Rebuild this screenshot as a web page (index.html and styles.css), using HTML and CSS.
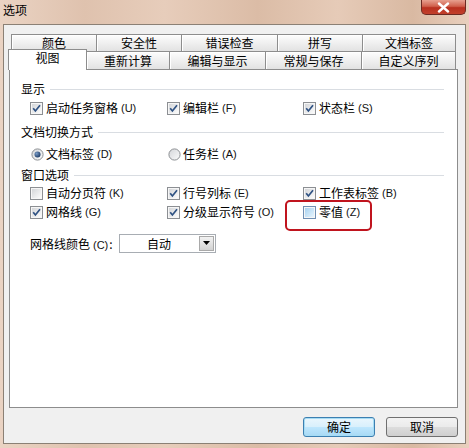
FILE: index.html
```html
<!DOCTYPE html>
<html lang="zh-CN">
<head>
<meta charset="utf-8">
<title>选项</title>
<link rel="stylesheet" href="styles.css">
</head>
<body>
<svg class="defs" width="0" height="0" aria-hidden="true">
  <defs>
    <linearGradient id="gbox" x1="0" y1="0" x2="1" y2="1">
      <stop offset="0" stop-color="#d4d6d9"/>
      <stop offset="1" stop-color="#fbfbfb"/>
    </linearGradient>
    <linearGradient id="gblue" x1="0" y1="0" x2="1" y2="1">
      <stop offset="0" stop-color="#a8d2f0"/>
      <stop offset="1" stop-color="#e6f4fd"/>
    </linearGradient>
    <radialGradient id="gdot" cx="0.35" cy="0.35" r="0.7">
      <stop offset="0" stop-color="#7a9cc6"/>
      <stop offset="1" stop-color="#1d3b66"/>
    </radialGradient>
    <symbol id="cbox" viewBox="0 0 13 13">
      <rect x="0.5" y="0.5" width="12" height="12" fill="#f6f6f6" stroke="#8c8f93"/>
      <rect x="2" y="2" width="9" height="9" fill="url(#gbox)"/>
    </symbol>
    <symbol id="cboxblue" viewBox="0 0 13 13">
      <rect x="0.5" y="0.5" width="12" height="12" fill="#f6f6f6" stroke="#6f8fb3"/>
      <rect x="2" y="2" width="9" height="9" fill="url(#gblue)"/>
    </symbol>
    <symbol id="tick" viewBox="0 0 13 13">
      <path d="M3.2 6.2 L5.4 9 L10 3.2" fill="none" stroke="#2f5283" stroke-width="1.7"/>
    </symbol>
    <symbol id="radio" viewBox="0 0 13 13">
      <circle cx="6.5" cy="6.5" r="5.6" fill="url(#gbox)" stroke="#8c8f93"/>
    </symbol>
    <symbol id="dot" viewBox="0 0 13 13">
      <circle cx="6.5" cy="6.5" r="3" fill="url(#gdot)"/>
    </symbol>
  </defs>
</svg>

<div class="window">
  <div class="titlebar">
    <span class="title">选项</span>
    <div class="close">
      <svg width="13" height="11" viewBox="0 0 13 11"><path d="M2 1.5 L11 9.5 M11 1.5 L2 9.5" stroke="#fff" stroke-width="2.4" stroke-linecap="round"/></svg>
    </div>
  </div>

  <div class="dialog">
    <div class="tabs">
      <div class="tabrow row1">
        <div class="tab first t86">颜色</div>
        <div class="tab t85">安全性</div>
        <div class="tab t96">错误检查</div>
        <div class="tab t85">拼写</div>
        <div class="tab t93">文档标签</div>
      </div>
      <div class="tabrow row2">
        <div class="tab sel t79">视图</div>
        <div class="tab t83">重新计算</div>
        <div class="tab t96">编辑与显示</div>
        <div class="tab t96">常规与保存</div>
        <div class="tab t94">自定义序列</div>
      </div>
    </div>

    <div class="panel">
      <div class="group g1"><span>显示</span><i class="rule"></i></div>
      <div class="opts r20">
        <label class="opt"><svg class="ic"><use href="#cbox"/><use href="#tick"/></svg>启动任务窗格<span class="mn">(U)</span></label>
        <label class="opt"><svg class="ic"><use href="#cbox"/><use href="#tick"/></svg>编辑栏<span class="mn">(F)</span></label>
        <label class="opt"><svg class="ic"><use href="#cbox"/><use href="#tick"/></svg>状态栏<span class="mn">(S)</span></label>
      </div>

      <div class="group g2"><span>文档切换方式</span><i class="rule"></i></div>
      <div class="opts r20 m3">
        <label class="opt rad"><svg class="ic"><use href="#radio"/><use href="#dot"/></svg>文档标签<span class="mn">(D)</span></label>
        <label class="opt rad"><svg class="ic"><use href="#radio"/></svg>任务栏<span class="mn">(A)</span></label>
      </div>

      <div class="group g3"><span>窗口选项</span><i class="rule"></i></div>
      <div class="opts r18">
        <label class="opt"><svg class="ic"><use href="#cbox"/></svg>自动分页符<span class="mn">(K)</span></label>
        <label class="opt"><svg class="ic"><use href="#cbox"/><use href="#tick"/></svg>行号列标<span class="mn">(E)</span></label>
        <label class="opt"><svg class="ic"><use href="#cbox"/><use href="#tick"/></svg>工作表标签<span class="mn">(B)</span></label>
      </div>
      <div class="opts r18 m1">
        <label class="opt"><svg class="ic"><use href="#cbox"/><use href="#tick"/></svg>网格线<span class="mn">(G)</span></label>
        <label class="opt"><svg class="ic"><use href="#cbox"/><use href="#tick"/></svg>分级显示符号<span class="mn">(O)</span></label>
        <label class="opt zero"><svg class="ic"><use href="#cboxblue"/></svg>零值<span class="mn">(Z)</span><span class="mark"></span></label>
      </div>

      <div class="colorrow">
        <span class="colorlabel">网格线颜色<span class="mn">(C)</span>:</span>
        <div class="select">
          <span class="val">自动</span>
          <span class="arrow"><svg width="7" height="4" viewBox="0 0 7 4"><path d="M0 0 H7 L3.5 4 Z" fill="#000"/></svg></span>
        </div>
      </div>
    </div>

    <div class="buttons">
      <button class="btn default">确定</button>
      <button class="btn">取消</button>
    </div>
  </div>
</div>
</body>
</html>
```

FILE: styles.css
```css
* { box-sizing: border-box; }
html, body { margin: 0; padding: 0; }
body {
  width: 469px;
  height: 448px;
  overflow: hidden;
  font-family: "Noto Sans CJK SC", "Noto Sans", sans-serif;
  font-size: 12px;
  color: #000;
}
.defs { position: absolute; width: 0; height: 0; }

.window {
  width: 469px;
  height: 448px;
  background: linear-gradient(90deg, #ead3c3 0%, #dfc2ae 18%, #e7cdbb 35%, #dbbca6 55%, #e6cbb8 72%, #d9b9a2 88%, #e9d0be 100%);
  display: flex;
  flex-direction: column;
}

.titlebar {
  height: 24px;
  display: flex;
  justify-content: space-between;
  align-items: flex-start;
}
.title {
  padding-left: 3px;
  line-height: 20px;
  font-size: 12px;
}
.close {
  width: 45px;
  height: 15px;
  margin-right: 3px;
  background: linear-gradient(#e7a08f 0%, #d0604c 45%, #b8301f 55%, #c2402c 100%);
  border: 1px solid #6c2a22;
  border-top: none;
  border-radius: 0 0 5px 5px;
  display: flex;
  align-items: center;
  justify-content: center;
}

.dialog {
  margin: 0 3px;
  width: 463px;
  height: 420px;
  border: 1px solid #8b8075;
  background: #f0f0f0;
  padding: 9px 7px 6px 5px;
  display: flex;
  flex-direction: column;
}

/* tabs */
.tabs { display: flex; flex-direction: column; }
.tabrow { display: flex; align-items: flex-start; }
.row1 { height: 17px; margin-left: 2px; }
.row2 { height: 18px; }
.tab {
  height: 100%;
  background: linear-gradient(#fdfdfd, #e2e2e2);
  border-top: 1px solid #8d8d8d;
  border-right: 1px solid #8d8d8d;
  box-shadow: inset 1px 1px 0 #ffffff;
  text-align: center;
  line-height: 16px;
  white-space: nowrap;
}
.row2 .tab { line-height: 17px; }
.tab.first { border-left: 1px solid #8d8d8d; }
.tab.sel {
  position: relative;
  z-index: 2;
  height: 21px;
  margin: -2px 0 -1px -1px;
  background: #fff;
  border-left: 1px solid #8d8d8d;
  box-shadow: none;
  line-height: 16px;
}
.t79 { width: 79px; }
.t83 { width: 83px; }
.t85 { width: 85px; }
.t86 { width: 86px; }
.t93 { width: 93px; }
.t94 { width: 94px; }
.t96 { width: 96px; }

/* panel */
.panel {
  height: 339px;
  background: #fff;
  border: 1px solid #8d8d8d;
  display: flex;
  flex-direction: column;
}
.group {
  height: 18px;
  display: flex;
  align-items: center;
  padding-left: 11px;
  padding-right: 13px;
  line-height: 18px;
}
.group .rule {
  flex: 1;
  height: 1px;
  margin-left: 5px;
  background: #d9dde2;
}
.g1 { margin-top: 10px; }
.g2 { margin-top: 5px; }
.g3 { margin-top: 2px; }

.opts {
  display: grid;
  grid-template-columns: 137px 136px auto;
  padding-left: 20px;
}
.r20 { height: 20px; }
.r18 { height: 18px; }
.m3 { margin-top: 3px; }
.m1 { margin-top: 1px; }
.opt {
  display: flex;
  align-items: center;
  white-space: nowrap;
  line-height: 16px;
}
.ic {
  width: 13px;
  height: 13px;
  margin-right: 3px;
  flex: none;
}
.rad .ic { margin-left: 1px; margin-right: 2px; }
.mn {
  font-family: "Liberation Sans", sans-serif;
  font-size: 11px;
  margin-left: 3px;
  color: #111;
}
.zero { position: relative; }
.zero .mark {
  position: absolute;
  left: -18px;
  top: -3px;
  width: 87px;
  height: 31px;
  border: 2px solid #c0141e;
  border-radius: 5px;
}

.colorrow {
  display: flex;
  align-items: center;
  height: 20px;
  margin-top: 12px;
  padding-left: 20px;
}
.colorlabel { width: 89px; white-space: nowrap; }
.colorlabel .mn { margin-left: 3px; margin-right: 1px; }
.select {
  width: 97px;
  height: 19px;
  border: 1px solid #a8adb3;
  background: #fff;
  display: flex;
}
.select .val {
  flex: 1;
  text-align: center;
  line-height: 17px;
}
.select .arrow {
  width: 15px;
  margin: 1px;
  background: linear-gradient(#f2f2f2, #d2d2d2);
  border: 1px solid #a9a9a9;
  display: flex;
  align-items: center;
  justify-content: center;
}

/* buttons */
.buttons {
  display: flex;
  justify-content: flex-end;
  gap: 11px;
  margin-top: 9px;
}
.btn {
  width: 72px;
  height: 20px;
  padding: 0;
  border: 1px solid #707070;
  border-radius: 3px;
  background: linear-gradient(#f3f3f3 0%, #ebebeb 48%, #dcdcdc 52%, #cfcfcf 100%);
  font-family: "Noto Sans CJK SC", "Noto Sans", sans-serif;
  font-size: 12px;
  line-height: 18px;
  color: #000;
}
.btn.default {
  border-color: #3c7fb1;
  box-shadow: inset 0 0 0 1px #a6dcf4;
  background: linear-gradient(#eaf6fd 0%, #d9f0fc 48%, #bee6fd 52%, #a7d9f5 100%);
}
```
